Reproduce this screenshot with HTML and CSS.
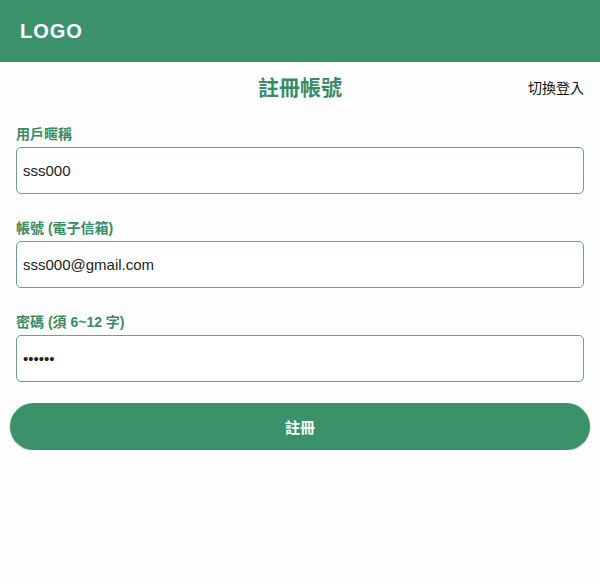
FILE: index.html
```html
<!DOCTYPE html>
<html lang="zh-Hant">
<head>
<meta charset="utf-8">
<link rel="stylesheet" href="styles.css">
</head>
<body>
<header class="topbar"><span class="logo">LOGO</span></header>
<main class="page">
  <div class="title-row">
    <h1 class="title">註冊帳號</h1>
    <a class="switch">切換登入</a>
  </div>
  <form class="form">
    <label class="field">
      <span class="label">用戶暱稱</span>
      <input class="input" type="text" value="sss000">
    </label>
    <label class="field">
      <span class="label">帳號 (電子信箱)</span>
      <input class="input" type="text" value="sss000@gmail.com">
    </label>
    <label class="field">
      <span class="label">密碼 (須 6~12 字)</span>
      <input class="input" type="password" value="123456">
    </label>
    <button class="submit" type="button">註冊</button>
  </form>
</main>
</body>
</html>
```
FILE: styles.css
```css
* { box-sizing: border-box; }
html, body { margin: 0; padding: 0; }
body {
  background: #fdfdfd;
  font-family: "Liberation Sans", Arial, "Noto Sans CJK TC", sans-serif;
  color: #111;
}
.topbar {
  height: 62px;
  background: #3b9169;
  display: flex;
  align-items: center;
  padding: 0 20px;
}
.logo {
  color: #fff;
  font-weight: 700;
  font-size: 20px;
  letter-spacing: 1px;
}
.page { padding: 0 16px; }
.title-row {
  position: relative;
  height: 52px;
  display: flex;
  align-items: center;
  justify-content: center;
}
.title {
  margin: 0 0 4px;
  font-size: 21px;
  font-weight: 700;
  color: #3b8a66;
  font-family: "Noto Sans CJK TC", sans-serif;
}
.switch {
  position: absolute;
  right: 0;
  top: 15px;
  font-size: 14px;
  color: #111;
  font-family: "Noto Sans CJK TC", sans-serif;
}
.form { display: flex; flex-direction: column; }
.field { display: flex; flex-direction: column; margin-bottom: 25px; }
.field:first-child { margin-top: 11px; }
.label {
  font-size: 14px;
  font-weight: 700;
  color: #3b8a66;
  line-height: 18px;
  margin-bottom: 4px;
  font-family: "Liberation Sans", "Noto Sans CJK TC", sans-serif;
}
.input {
  height: 47px;
  width: 100%;
  border: 1px solid #6f9e8c;
  border-radius: 5px;
  background: #fff;
  padding: 0 6px;
  font-size: 15px;
  font-family: "Liberation Sans", Arial, sans-serif;
  color: #222;
  outline: none;
}
.submit {
  margin: -4px -6px 0;
  height: 47px;
  border: none;
  border-radius: 24px;
  background: #3b9169;
  color: #fff;
  font-size: 15px;
  font-weight: 700;
  font-family: "Noto Sans CJK TC", sans-serif;
  box-shadow: 0 1px 2px rgba(0,0,0,0.25);
}
```
